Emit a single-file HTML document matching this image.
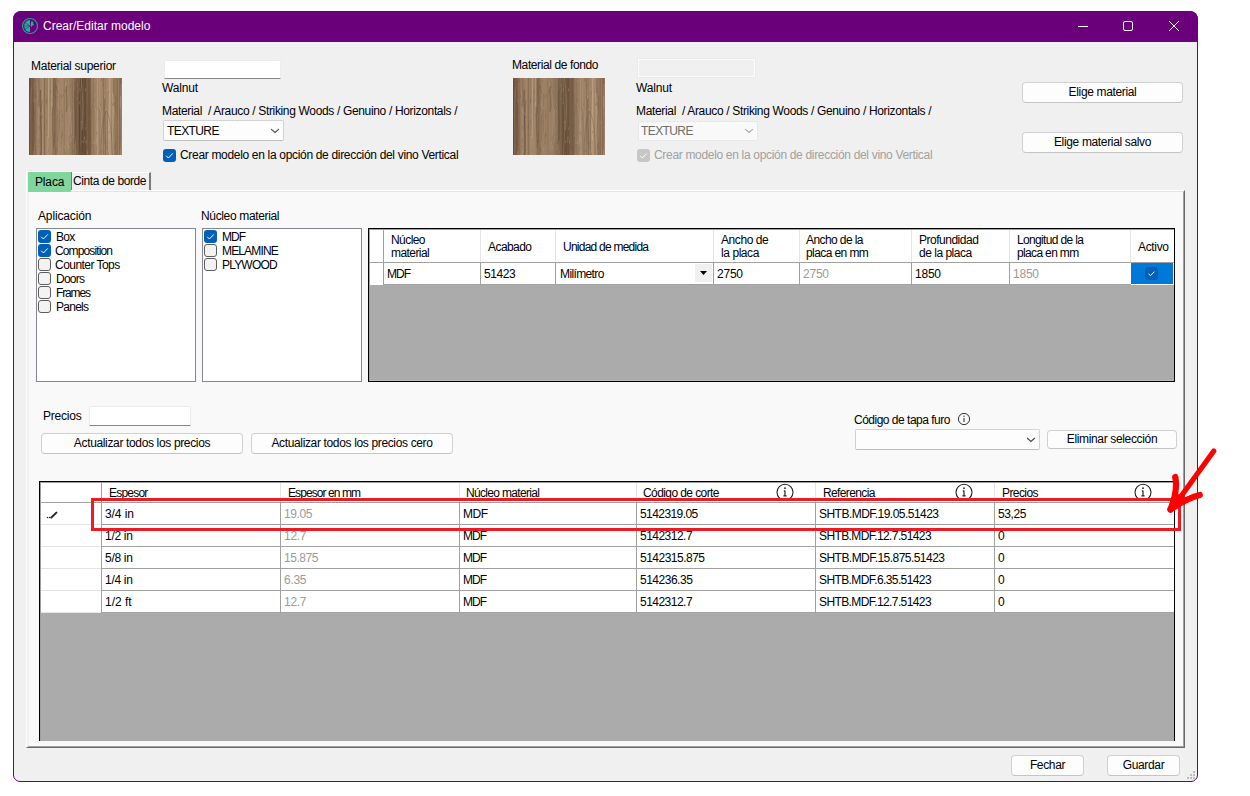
<!DOCTYPE html>
<html><head><meta charset="utf-8">
<style>
*{box-sizing:border-box;margin:0;padding:0}
html,body{width:1250px;height:796px;overflow:hidden;background:#fff;position:relative}
body{font-family:"Liberation Sans",sans-serif;font-size:12px;letter-spacing:-0.35px;color:#000}
.a{position:absolute}
.t{position:absolute;line-height:13px;white-space:pre;margin-top:1px}
#win{position:absolute;left:13px;top:11px;width:1185px;height:771px;border:1px solid #6a007a;border-radius:8px 8px 7px 7px;background:#f0f0f0;overflow:hidden}
#title{position:absolute;left:13px;top:11px;width:1185px;height:31px;background:#6a007a;border-radius:8px 8px 0 0}
.btn{position:absolute;background:#fdfdfd;border:1px solid #d0d0d0;border-bottom-color:#c4c4c4;border-radius:4px;text-align:center;line-height:18px}
.tb{position:absolute;background:#fff;border:1px solid #ececec;border-bottom:1px solid #868686;border-radius:2px 2px 0 0}
.cb{position:absolute;width:13px;height:13px;border-radius:3px;background:#005fb8}
.cbu{position:absolute;width:13px;height:13px;border-radius:3px;background:#f3f3f3;border:1px solid #5c5c5c}
.wood{position:absolute;background-color:#85705b}
.gl{position:absolute;background:#a0a0a0}
.gh{position:absolute;background:#e4e4e4}
</style></head><body>
<div id="win"></div>
<div id="title"></div>
<!-- title bar -->
<svg class="a" style="left:21px;top:17px" width="18" height="18" viewBox="0 0 18 18">
<circle cx="9" cy="9" r="7.5" fill="none" stroke="#1aa894" stroke-width="1.1"/>
<path d="M9 3.1 A5.9 5.9 0 0 0 9 14.9 Z" fill="#0fbc96"/>
<path d="M9.6 9 L10.3 4.2 L12.5 5 L12 6.6 L13 7.2 L12.2 8.4 L11.2 8.6 L10.8 10 Z" fill="#0fbc96"/>
<path d="M9 9 L3.6 5.4 M9 9 L3 9 M9 9 L3.8 12.4" stroke="#6a007a" stroke-width="0.55"/>
</svg>
<div class="t" style="left:43px;top:19px;color:#fff;font-size:12px;letter-spacing:0">Crear/Editar modelo</div>
<div class="a" style="left:1078px;top:26px;width:10px;height:1px;background:#fff"></div>
<div class="a" style="left:1123px;top:21px;width:10px;height:10px;border:1px solid #fff;border-radius:2px"></div>
<svg class="a" style="left:1168px;top:20px" width="12" height="12" viewBox="0 0 12 12"><path d="M1 1L11 11M11 1L1 11" stroke="#fff" stroke-width="1"/></svg>

<!-- header -->
<div class="t" style="left:31px;top:59px;letter-spacing:-0.27px">Material superior</div>
<div class="wood" id="wood1" style="left:29px;top:78px;width:93px;height:77px"><svg width="93" height="77" viewBox="0 0 93 77" preserveAspectRatio="none" style="display:block"><rect x="0" y="0" width="1.05" height="77" fill="#694f38"/><rect x="1" y="0" width="1.05" height="77" fill="#70553e"/><rect x="2" y="0" width="1.05" height="77" fill="#7c6148"/><rect x="3" y="0" width="1.05" height="77" fill="#785d45"/><rect x="4" y="0" width="1.05" height="77" fill="#81664d"/><rect x="5" y="0" width="1.05" height="77" fill="#8b7055"/><rect x="6" y="0" width="1.05" height="77" fill="#896d53"/><rect x="7" y="0" width="1.05" height="77" fill="#95795e"/><rect x="8" y="0" width="1.05" height="77" fill="#9d8164"/><rect x="9" y="0" width="1.05" height="77" fill="#a6896b"/><rect x="10" y="0" width="1.05" height="77" fill="#997d61"/><rect x="11" y="0" width="1.05" height="77" fill="#a08366"/><rect x="12" y="0" width="1.05" height="77" fill="#9c8064"/><rect x="13" y="0" width="1.05" height="77" fill="#a98d6e"/><rect x="14" y="0" width="1.05" height="77" fill="#9e8265"/><rect x="15" y="0" width="1.05" height="77" fill="#876c52"/><rect x="16" y="0" width="1.05" height="77" fill="#9c8063"/><rect x="17" y="0" width="1.05" height="77" fill="#a28669"/><rect x="18" y="0" width="1.05" height="77" fill="#a28668"/><rect x="19" y="0" width="1.05" height="77" fill="#a88b6d"/><rect x="20" y="0" width="1.05" height="77" fill="#a08467"/><rect x="21" y="0" width="1.05" height="77" fill="#9c7f63"/><rect x="22" y="0" width="1.05" height="77" fill="#a5896b"/><rect x="23" y="0" width="1.05" height="77" fill="#967a5e"/><rect x="24" y="0" width="1.05" height="77" fill="#8f7459"/><rect x="25" y="0" width="1.05" height="77" fill="#876c52"/><rect x="26" y="0" width="1.05" height="77" fill="#81664d"/><rect x="27" y="0" width="1.05" height="77" fill="#92765b"/><rect x="28" y="0" width="1.05" height="77" fill="#987c60"/><rect x="29" y="0" width="1.05" height="77" fill="#a5886b"/><rect x="30" y="0" width="1.05" height="77" fill="#9f8366"/><rect x="31" y="0" width="1.05" height="77" fill="#a38669"/><rect x="32" y="0" width="1.05" height="77" fill="#a18467"/><rect x="33" y="0" width="1.05" height="77" fill="#a4876a"/><rect x="34" y="0" width="1.05" height="77" fill="#9c8063"/><rect x="35" y="0" width="1.05" height="77" fill="#95795d"/><rect x="36" y="0" width="1.05" height="77" fill="#a28568"/><rect x="37" y="0" width="1.05" height="77" fill="#a18568"/><rect x="38" y="0" width="1.05" height="77" fill="#a08467"/><rect x="39" y="0" width="1.05" height="77" fill="#a08467"/><rect x="40" y="0" width="1.05" height="77" fill="#9a7e61"/><rect x="41" y="0" width="1.05" height="77" fill="#977b5f"/><rect x="42" y="0" width="1.05" height="77" fill="#94785c"/><rect x="43" y="0" width="1.05" height="77" fill="#8a6f54"/><rect x="44" y="0" width="1.05" height="77" fill="#967a5e"/><rect x="45" y="0" width="1.05" height="77" fill="#886c52"/><rect x="46" y="0" width="1.05" height="77" fill="#8a6f54"/><rect x="47" y="0" width="1.05" height="77" fill="#785d45"/><rect x="48" y="0" width="1.05" height="77" fill="#7e634a"/><rect x="49" y="0" width="1.05" height="77" fill="#765b43"/><rect x="50" y="0" width="1.05" height="77" fill="#5d442f"/><rect x="51" y="0" width="1.05" height="77" fill="#5e442f"/><rect x="52" y="0" width="1.05" height="77" fill="#6c523b"/><rect x="53" y="0" width="1.05" height="77" fill="#614731"/><rect x="54" y="0" width="1.05" height="77" fill="#6e543d"/><rect x="55" y="0" width="1.05" height="77" fill="#674d37"/><rect x="56" y="0" width="1.05" height="77" fill="#654b35"/><rect x="57" y="0" width="1.05" height="77" fill="#765b43"/><rect x="58" y="0" width="1.05" height="77" fill="#7b6047"/><rect x="59" y="0" width="1.05" height="77" fill="#71573f"/><rect x="60" y="0" width="1.05" height="77" fill="#725740"/><rect x="61" y="0" width="1.05" height="77" fill="#80654c"/><rect x="62" y="0" width="1.05" height="77" fill="#967a5e"/><rect x="63" y="0" width="1.05" height="77" fill="#997d61"/><rect x="64" y="0" width="1.05" height="77" fill="#92765b"/><rect x="65" y="0" width="1.05" height="77" fill="#9b7f63"/><rect x="66" y="0" width="1.05" height="77" fill="#9f8366"/><rect x="67" y="0" width="1.05" height="77" fill="#a18568"/><rect x="68" y="0" width="1.05" height="77" fill="#b19475"/><rect x="69" y="0" width="1.05" height="77" fill="#a38669"/><rect x="70" y="0" width="1.05" height="77" fill="#ab8e70"/><rect x="71" y="0" width="1.05" height="77" fill="#a4886a"/><rect x="72" y="0" width="1.05" height="77" fill="#977b5f"/><rect x="73" y="0" width="1.05" height="77" fill="#9b7f63"/><rect x="74" y="0" width="1.05" height="77" fill="#8d7257"/><rect x="75" y="0" width="1.05" height="77" fill="#9e8265"/><rect x="76" y="0" width="1.05" height="77" fill="#987c60"/><rect x="77" y="0" width="1.05" height="77" fill="#a3876a"/><rect x="78" y="0" width="1.05" height="77" fill="#a18568"/><rect x="79" y="0" width="1.05" height="77" fill="#a5896b"/><rect x="80" y="0" width="1.05" height="77" fill="#b79a7a"/><rect x="81" y="0" width="1.05" height="77" fill="#b19475"/><rect x="82" y="0" width="1.05" height="77" fill="#a08366"/><rect x="83" y="0" width="1.05" height="77" fill="#a6896c"/><rect x="84" y="0" width="1.05" height="77" fill="#91755a"/><rect x="85" y="0" width="1.05" height="77" fill="#907459"/><rect x="86" y="0" width="1.05" height="77" fill="#957a5e"/><rect x="87" y="0" width="1.05" height="77" fill="#907559"/><rect x="88" y="0" width="1.05" height="77" fill="#886d53"/><rect x="89" y="0" width="1.05" height="77" fill="#a08467"/><rect x="90" y="0" width="1.05" height="77" fill="#8f7459"/><rect x="91" y="0" width="1.05" height="77" fill="#8d7157"/><rect x="92" y="0" width="1.05" height="77" fill="#95795e"/><path d="M30.6 15 C31.2 28 29.8 41 30.9 54" stroke="#5a4838" stroke-width="0.8" opacity="0.23" fill="none"/><path d="M42.1 32 C40.1 43 44.6 54 41.1 64" stroke="#b9a387" stroke-width="0.8" opacity="0.49" fill="none"/><path d="M76.1 21 C76.0 36 73.5 51 76.0 66" stroke="#5a4838" stroke-width="0.8" opacity="0.26" fill="none"/><path d="M4.4 24 C3.9 39 6.8 53 4.2 68" stroke="#685341" stroke-width="0.8" opacity="0.54" fill="none"/><path d="M45.7 -6 C47.8 17 46.3 40 46.7 63" stroke="#685341" stroke-width="0.8" opacity="0.54" fill="none"/><path d="M26.1 7 C24.1 16 25.3 26 25.1 36" stroke="#5a4838" stroke-width="1.2" opacity="0.22" fill="none"/><path d="M53.2 39 C54.4 54 53.7 70 53.8 86" stroke="#4f3f31" stroke-width="1.2" opacity="0.25" fill="none"/><path d="M13.1 22 C10.2 46 13.9 71 11.6 95" stroke="#5a4838" stroke-width="1.0" opacity="0.37" fill="none"/><path d="M44.8 -15 C46.3 9 47.2 33 45.6 57" stroke="#4f3f31" stroke-width="0.6" opacity="0.25" fill="none"/><path d="M68.5 34 C68.1 53 70.3 73 68.3 92" stroke="#b9a387" stroke-width="1.2" opacity="0.32" fill="none"/><path d="M80.3 15 C77.8 35 81.1 55 79.0 75" stroke="#cbb598" stroke-width="1.2" opacity="0.43" fill="none"/><path d="M92.4 6 C89.9 33 93.9 60 91.1 86" stroke="#b9a387" stroke-width="1.2" opacity="0.53" fill="none"/><path d="M2.8 10 C5.3 31 1.3 52 4.0 73" stroke="#4f3f31" stroke-width="0.6" opacity="0.21" fill="none"/><path d="M1.1 25 C3.6 39 1.0 53 2.3 66" stroke="#685341" stroke-width="0.8" opacity="0.41" fill="none"/><path d="M22.5 28 C20.7 48 20.7 67 21.6 86" stroke="#b9a387" stroke-width="1.2" opacity="0.27" fill="none"/><path d="M20.4 1 C17.7 31 17.8 60 19.0 90" stroke="#c2ac90" stroke-width="1.2" opacity="0.25" fill="none"/><path d="M91.2 30 C91.3 44 92.2 57 91.2 71" stroke="#4f3f31" stroke-width="0.8" opacity="0.30" fill="none"/><path d="M66.6 30 C67.3 42 67.7 54 66.9 66" stroke="#cbb598" stroke-width="0.6" opacity="0.36" fill="none"/><path d="M26.1 18 C24.3 34 27.8 50 25.2 65" stroke="#685341" stroke-width="0.6" opacity="0.48" fill="none"/><path d="M24.8 18 C26.6 38 27.5 58 25.7 78" stroke="#cbb598" stroke-width="0.6" opacity="0.24" fill="none"/><path d="M63.7 25 C60.9 42 62.0 59 62.3 75" stroke="#4f3f31" stroke-width="0.6" opacity="0.29" fill="none"/><path d="M72.4 4 C74.8 30 69.9 56 73.6 83" stroke="#cbb598" stroke-width="0.8" opacity="0.38" fill="none"/><path d="M86.7 18 C86.0 42 87.1 67 86.4 92" stroke="#5a4838" stroke-width="0.8" opacity="0.36" fill="none"/><path d="M81.8 -14 C83.6 19 84.3 52 82.7 85" stroke="#b9a387" stroke-width="0.8" opacity="0.36" fill="none"/><path d="M11.5 12 C10.4 36 13.9 60 10.9 84" stroke="#4f3f31" stroke-width="1.0" opacity="0.54" fill="none"/><path d="M79.6 13 C79.5 36 76.8 60 79.6 83" stroke="#5a4838" stroke-width="1.0" opacity="0.21" fill="none"/><path d="M75.3 21 C75.1 45 78.2 69 75.2 93" stroke="#5a4838" stroke-width="1.0" opacity="0.26" fill="none"/><path d="M83.8 15 C85.3 36 83.4 58 84.5 79" stroke="#cbb598" stroke-width="1.2" opacity="0.44" fill="none"/><path d="M52.0 -1 C54.0 16 54.4 34 53.0 52" stroke="#c2ac90" stroke-width="1.0" opacity="0.38" fill="none"/><path d="M19.4 -8 C19.4 15 20.0 37 19.4 60" stroke="#cbb598" stroke-width="1.2" opacity="0.38" fill="none"/><path d="M2.6 9 C-0.0 32 2.8 55 1.3 78" stroke="#b9a387" stroke-width="0.6" opacity="0.39" fill="none"/><path d="M38.5 10 C40.9 25 41.1 40 39.7 56" stroke="#b9a387" stroke-width="1.2" opacity="0.29" fill="none"/><path d="M85.6 36 C87.2 45 82.7 55 86.4 65" stroke="#5a4838" stroke-width="0.6" opacity="0.27" fill="none"/><path d="M18.1 -5 C18.0 16 18.5 37 18.1 58" stroke="#685341" stroke-width="1.0" opacity="0.30" fill="none"/><path d="M79.2 -19 C81.2 9 79.9 36 80.2 64" stroke="#cbb598" stroke-width="1.2" opacity="0.27" fill="none"/><path d="M50.1 -6 C51.9 22 52.5 49 51.0 77" stroke="#c2ac90" stroke-width="0.8" opacity="0.39" fill="none"/><path d="M29.4 33 C27.8 43 30.7 53 28.6 63" stroke="#5a4838" stroke-width="0.8" opacity="0.28" fill="none"/><path d="M24.1 -8 C25.9 17 21.7 42 25.0 67" stroke="#4f3f31" stroke-width="0.8" opacity="0.39" fill="none"/><path d="M53.0 10 C51.1 33 50.4 55 52.1 78" stroke="#4f3f31" stroke-width="1.0" opacity="0.24" fill="none"/><path d="M9.9 -11 C8.1 2 11.9 16 9.0 29" stroke="#685341" stroke-width="1.2" opacity="0.41" fill="none"/><path d="M92.1 -15 C91.4 -4 91.7 7 91.8 18" stroke="#5a4838" stroke-width="1.2" opacity="0.25" fill="none"/><path d="M33.0 31 C32.7 41 34.4 52 32.8 63" stroke="#4f3f31" stroke-width="0.6" opacity="0.20" fill="none"/><path d="M37.7 -1 C39.7 10 39.9 20 38.7 31" stroke="#5a4838" stroke-width="0.6" opacity="0.23" fill="none"/><path d="M84.5 28 C87.0 40 86.0 52 85.7 65" stroke="#c2ac90" stroke-width="1.0" opacity="0.38" fill="none"/><path d="M72.4 33 C74.0 50 73.9 68 73.2 85" stroke="#b9a387" stroke-width="1.0" opacity="0.25" fill="none"/><path d="M37.7 8 C36.9 17 38.6 25 37.3 34" stroke="#5a4838" stroke-width="1.0" opacity="0.48" fill="none"/><path d="M58.0 20 C58.2 38 57.4 56 58.1 74" stroke="#685341" stroke-width="0.8" opacity="0.30" fill="none"/><path d="M93.0 39 C93.7 47 94.4 56 93.3 65" stroke="#685341" stroke-width="1.2" opacity="0.24" fill="none"/><path d="M23.9 -19 C22.5 -3 22.9 13 23.2 29" stroke="#c2ac90" stroke-width="1.2" opacity="0.47" fill="none"/><path d="M50.3 18 C47.7 41 50.9 64 49.0 87" stroke="#685341" stroke-width="0.6" opacity="0.40" fill="none"/><path d="M70.6 31 C71.2 47 70.2 63 70.9 78" stroke="#5a4838" stroke-width="0.8" opacity="0.34" fill="none"/><path d="M46.0 12 C44.6 30 48.6 48 45.3 66" stroke="#4f3f31" stroke-width="1.0" opacity="0.41" fill="none"/><path d="M61.7 15 C61.2 35 62.8 56 61.4 76" stroke="#5a4838" stroke-width="0.8" opacity="0.20" fill="none"/><path d="M4.9 -16 C4.5 19 4.8 54 4.7 89" stroke="#4f3f31" stroke-width="1.0" opacity="0.22" fill="none"/><path d="M90.5 -11 C89.0 24 91.7 59 89.7 94" stroke="#685341" stroke-width="1.2" opacity="0.23" fill="none"/><rect x="4.7" y="32.1" width="0.8" height="2.0" fill="#5e4b3b" opacity="0.16"/><rect x="49.1" y="9.6" width="0.8" height="1.8" fill="#c6b093" opacity="0.25"/><rect x="55.9" y="49.2" width="0.8" height="2.4" fill="#c6b093" opacity="0.34"/><rect x="75.8" y="10.5" width="0.8" height="3.3" fill="#c6b093" opacity="0.21"/><rect x="10.6" y="68.7" width="0.8" height="2.2" fill="#c6b093" opacity="0.30"/><rect x="67.4" y="53.8" width="0.8" height="3.1" fill="#5e4b3b" opacity="0.34"/><rect x="17.7" y="19.2" width="0.8" height="3.7" fill="#5e4b3b" opacity="0.16"/><rect x="5.7" y="20.9" width="0.8" height="1.6" fill="#c6b093" opacity="0.16"/><rect x="20.7" y="21.4" width="0.8" height="3.8" fill="#5e4b3b" opacity="0.19"/><rect x="21.8" y="75.6" width="0.8" height="2.7" fill="#c6b093" opacity="0.20"/><rect x="32.0" y="57.4" width="0.8" height="3.5" fill="#5e4b3b" opacity="0.26"/><rect x="76.4" y="64.5" width="0.8" height="2.6" fill="#5e4b3b" opacity="0.34"/><rect x="36.3" y="11.6" width="0.8" height="3.1" fill="#5e4b3b" opacity="0.40"/><rect x="30.3" y="42.2" width="0.8" height="2.6" fill="#5e4b3b" opacity="0.24"/><rect x="9.0" y="67.4" width="0.8" height="2.9" fill="#5e4b3b" opacity="0.26"/><rect x="52.8" y="62.8" width="0.8" height="2.2" fill="#c6b093" opacity="0.34"/><rect x="7.1" y="16.4" width="0.8" height="3.2" fill="#5e4b3b" opacity="0.27"/><rect x="71.1" y="25.3" width="0.8" height="2.0" fill="#5e4b3b" opacity="0.31"/><rect x="30.4" y="69.8" width="0.8" height="3.3" fill="#c6b093" opacity="0.29"/><rect x="85.4" y="72.4" width="0.8" height="2.6" fill="#c6b093" opacity="0.35"/><rect x="28.3" y="24.5" width="0.8" height="3.9" fill="#c6b093" opacity="0.33"/><rect x="48.0" y="6.5" width="0.8" height="1.6" fill="#c6b093" opacity="0.32"/><rect x="54.4" y="61.3" width="0.8" height="3.5" fill="#c6b093" opacity="0.29"/><rect x="77.8" y="43.3" width="0.8" height="1.7" fill="#5e4b3b" opacity="0.26"/><rect x="79.5" y="62.5" width="0.8" height="2.8" fill="#5e4b3b" opacity="0.29"/><rect x="52.8" y="74.4" width="0.8" height="1.7" fill="#c6b093" opacity="0.29"/><rect x="73.3" y="6.5" width="0.8" height="2.2" fill="#5e4b3b" opacity="0.18"/><rect x="29.2" y="2.0" width="0.8" height="1.7" fill="#5e4b3b" opacity="0.35"/><rect x="39.3" y="54.8" width="0.8" height="3.4" fill="#c6b093" opacity="0.28"/><rect x="71.1" y="30.4" width="0.8" height="3.5" fill="#c6b093" opacity="0.23"/><rect x="12.7" y="37.6" width="0.8" height="3.3" fill="#5e4b3b" opacity="0.38"/><rect x="38.2" y="63.6" width="0.8" height="3.6" fill="#c6b093" opacity="0.35"/><rect x="77.5" y="68.4" width="0.8" height="2.8" fill="#5e4b3b" opacity="0.33"/><rect x="74.6" y="32.5" width="0.8" height="3.8" fill="#c6b093" opacity="0.21"/><rect x="15.1" y="48.9" width="0.8" height="2.3" fill="#5e4b3b" opacity="0.25"/><rect x="49.2" y="21.1" width="0.8" height="2.7" fill="#5e4b3b" opacity="0.33"/><rect x="28.2" y="12.0" width="0.8" height="3.8" fill="#5e4b3b" opacity="0.34"/><rect x="1.6" y="37.0" width="0.8" height="2.3" fill="#5e4b3b" opacity="0.20"/><rect x="33.4" y="45.3" width="0.8" height="3.0" fill="#c6b093" opacity="0.21"/><rect x="17.2" y="21.6" width="0.8" height="3.8" fill="#5e4b3b" opacity="0.38"/><rect x="58.3" y="72.5" width="0.8" height="3.6" fill="#c6b093" opacity="0.27"/><rect x="37.4" y="73.6" width="0.8" height="2.7" fill="#5e4b3b" opacity="0.21"/><rect x="4.6" y="73.0" width="0.8" height="3.9" fill="#c6b093" opacity="0.35"/><rect x="72.0" y="60.7" width="0.8" height="3.1" fill="#5e4b3b" opacity="0.21"/><rect x="1.0" y="36.4" width="0.8" height="2.6" fill="#c6b093" opacity="0.21"/><rect x="39.2" y="67.4" width="0.8" height="1.9" fill="#c6b093" opacity="0.23"/><rect x="24.1" y="66.9" width="0.8" height="3.1" fill="#5e4b3b" opacity="0.40"/><rect x="24.8" y="41.2" width="0.8" height="2.9" fill="#5e4b3b" opacity="0.19"/><rect x="19.0" y="70.5" width="0.8" height="3.6" fill="#5e4b3b" opacity="0.17"/><rect x="25.1" y="55.2" width="0.8" height="3.7" fill="#5e4b3b" opacity="0.32"/><rect x="7.7" y="57.6" width="0.8" height="1.5" fill="#c6b093" opacity="0.20"/><rect x="18.0" y="52.5" width="0.8" height="2.0" fill="#c6b093" opacity="0.29"/><rect x="48.9" y="12.1" width="0.8" height="2.3" fill="#c6b093" opacity="0.25"/><rect x="51.7" y="76.8" width="0.8" height="2.4" fill="#5e4b3b" opacity="0.32"/><rect x="9.8" y="30.4" width="0.8" height="3.4" fill="#c6b093" opacity="0.35"/><rect x="11.3" y="34.3" width="0.8" height="3.3" fill="#c6b093" opacity="0.27"/><rect x="27.3" y="8.7" width="0.8" height="3.6" fill="#5e4b3b" opacity="0.36"/><rect x="66.9" y="69.4" width="0.8" height="2.2" fill="#5e4b3b" opacity="0.24"/><rect x="50.2" y="23.0" width="0.8" height="3.4" fill="#c6b093" opacity="0.29"/><rect x="8.1" y="14.5" width="0.8" height="3.3" fill="#c6b093" opacity="0.23"/><rect x="87.9" y="43.3" width="0.8" height="2.6" fill="#c6b093" opacity="0.25"/><rect x="9.5" y="47.9" width="0.8" height="3.2" fill="#5e4b3b" opacity="0.33"/><rect x="16.7" y="31.0" width="0.8" height="3.0" fill="#c6b093" opacity="0.17"/><rect x="21.1" y="12.1" width="0.8" height="2.6" fill="#5e4b3b" opacity="0.34"/><rect x="31.8" y="63.4" width="0.8" height="3.1" fill="#5e4b3b" opacity="0.34"/><rect x="76.4" y="29.7" width="0.8" height="3.8" fill="#c6b093" opacity="0.31"/><rect x="67.6" y="47.2" width="0.8" height="4.0" fill="#c6b093" opacity="0.35"/><rect x="61.4" y="46.9" width="0.8" height="2.2" fill="#5e4b3b" opacity="0.20"/><rect x="28.5" y="34.0" width="0.8" height="2.0" fill="#c6b093" opacity="0.23"/><rect x="27.3" y="7.9" width="0.8" height="2.1" fill="#5e4b3b" opacity="0.28"/><rect x="27.8" y="18.0" width="0.8" height="2.9" fill="#5e4b3b" opacity="0.20"/><rect x="86.8" y="76.9" width="0.8" height="2.9" fill="#5e4b3b" opacity="0.16"/><rect x="61.3" y="59.8" width="0.8" height="2.1" fill="#5e4b3b" opacity="0.29"/><rect x="64.8" y="25.3" width="0.8" height="2.2" fill="#c6b093" opacity="0.37"/><rect x="42.1" y="56.2" width="0.8" height="3.8" fill="#5e4b3b" opacity="0.29"/><rect x="52.1" y="43.1" width="0.8" height="1.9" fill="#c6b093" opacity="0.34"/><rect x="83.4" y="25.8" width="0.8" height="1.8" fill="#5e4b3b" opacity="0.36"/><rect x="26.8" y="69.1" width="0.8" height="3.4" fill="#5e4b3b" opacity="0.24"/><rect x="15.4" y="46.0" width="0.8" height="2.6" fill="#5e4b3b" opacity="0.25"/><rect x="72.8" y="71.6" width="0.8" height="2.3" fill="#5e4b3b" opacity="0.32"/><rect x="68.6" y="29.4" width="0.8" height="1.9" fill="#5e4b3b" opacity="0.25"/><rect x="3.1" y="40.6" width="0.8" height="2.9" fill="#5e4b3b" opacity="0.19"/><rect x="48.3" y="20.3" width="0.8" height="1.6" fill="#c6b093" opacity="0.35"/><rect x="67.1" y="60.6" width="0.8" height="3.9" fill="#c6b093" opacity="0.30"/><rect x="43.7" y="31.7" width="0.8" height="3.4" fill="#c6b093" opacity="0.27"/><rect x="92.5" y="64.5" width="0.8" height="3.6" fill="#c6b093" opacity="0.18"/><rect x="10.7" y="72.3" width="0.8" height="2.8" fill="#c6b093" opacity="0.26"/><rect x="84.1" y="24.7" width="0.8" height="2.2" fill="#5e4b3b" opacity="0.30"/><rect x="40.3" y="29.0" width="0.8" height="3.4" fill="#c6b093" opacity="0.23"/><rect x="55.2" y="5.4" width="0.8" height="3.6" fill="#5e4b3b" opacity="0.21"/><rect x="81.2" y="74.9" width="0.8" height="3.2" fill="#c6b093" opacity="0.28"/><rect x="22.2" y="23.6" width="0.8" height="3.9" fill="#c6b093" opacity="0.37"/><rect x="92.9" y="56.3" width="0.8" height="3.7" fill="#c6b093" opacity="0.26"/><rect x="74.9" y="17.1" width="0.8" height="2.9" fill="#c6b093" opacity="0.38"/><rect x="9.2" y="61.0" width="0.8" height="3.7" fill="#5e4b3b" opacity="0.29"/><rect x="42.1" y="22.8" width="0.8" height="1.6" fill="#c6b093" opacity="0.19"/><rect x="41.0" y="34.7" width="0.8" height="1.9" fill="#c6b093" opacity="0.32"/><rect x="21.5" y="23.6" width="0.8" height="3.7" fill="#c6b093" opacity="0.23"/><rect x="46.4" y="71.9" width="0.8" height="3.7" fill="#c6b093" opacity="0.20"/><rect x="79.9" y="53.3" width="0.8" height="2.0" fill="#5e4b3b" opacity="0.36"/><rect x="32.9" y="36.4" width="0.8" height="3.1" fill="#5e4b3b" opacity="0.32"/><rect x="52.1" y="41.0" width="0.8" height="2.0" fill="#5e4b3b" opacity="0.37"/><rect x="4.7" y="8.2" width="0.8" height="3.9" fill="#c6b093" opacity="0.22"/><rect x="39.1" y="67.7" width="0.8" height="3.2" fill="#c6b093" opacity="0.38"/><rect x="41.4" y="6.1" width="0.8" height="3.7" fill="#5e4b3b" opacity="0.18"/><rect x="64.3" y="20.7" width="0.8" height="2.8" fill="#5e4b3b" opacity="0.22"/><rect x="25.4" y="61.9" width="0.8" height="3.0" fill="#5e4b3b" opacity="0.21"/><rect x="28.0" y="71.4" width="0.8" height="2.2" fill="#5e4b3b" opacity="0.31"/><rect x="8.4" y="75.7" width="0.8" height="3.8" fill="#c6b093" opacity="0.17"/><rect x="84.4" y="0.5" width="0.8" height="2.8" fill="#c6b093" opacity="0.26"/><rect x="52.9" y="12.7" width="0.8" height="2.1" fill="#5e4b3b" opacity="0.22"/><rect x="51.0" y="14.3" width="0.8" height="4.0" fill="#5e4b3b" opacity="0.16"/><rect x="42.9" y="57.8" width="0.8" height="1.5" fill="#c6b093" opacity="0.37"/><rect x="5.6" y="4.9" width="0.8" height="2.3" fill="#c6b093" opacity="0.27"/><rect x="3.0" y="22.4" width="0.8" height="3.0" fill="#5e4b3b" opacity="0.34"/><rect x="10.4" y="33.5" width="0.8" height="2.9" fill="#c6b093" opacity="0.21"/><rect x="66.6" y="55.6" width="0.8" height="2.7" fill="#c6b093" opacity="0.21"/><rect x="53.9" y="38.4" width="0.8" height="2.0" fill="#5e4b3b" opacity="0.39"/><rect x="4.9" y="34.5" width="0.8" height="2.3" fill="#5e4b3b" opacity="0.30"/><rect x="56.6" y="62.1" width="0.8" height="3.3" fill="#c6b093" opacity="0.36"/><rect x="2.9" y="8.8" width="0.8" height="2.9" fill="#5e4b3b" opacity="0.29"/><rect x="73.6" y="18.3" width="0.8" height="1.6" fill="#5e4b3b" opacity="0.26"/><rect x="64.7" y="63.1" width="0.8" height="3.4" fill="#c6b093" opacity="0.27"/><rect x="60.5" y="39.3" width="0.8" height="2.1" fill="#c6b093" opacity="0.19"/><rect x="64.2" y="64.0" width="0.8" height="1.7" fill="#c6b093" opacity="0.25"/><rect x="33.9" y="16.7" width="0.8" height="1.8" fill="#5e4b3b" opacity="0.34"/><rect x="55.9" y="10.4" width="0.8" height="2.8" fill="#c6b093" opacity="0.40"/><rect x="0.3" y="31.6" width="0.8" height="1.7" fill="#5e4b3b" opacity="0.29"/><rect x="43.9" y="72.0" width="0.8" height="3.2" fill="#5e4b3b" opacity="0.33"/><rect x="90.8" y="47.2" width="0.8" height="2.1" fill="#c6b093" opacity="0.29"/><rect x="22.5" y="35.5" width="0.8" height="2.4" fill="#5e4b3b" opacity="0.23"/><rect x="91.3" y="47.0" width="0.8" height="1.9" fill="#5e4b3b" opacity="0.30"/><rect x="92.5" y="56.8" width="0.8" height="2.7" fill="#5e4b3b" opacity="0.25"/><rect x="78.4" y="29.3" width="0.8" height="2.0" fill="#5e4b3b" opacity="0.24"/><rect x="17.1" y="42.3" width="0.8" height="2.7" fill="#5e4b3b" opacity="0.25"/><rect x="55.2" y="58.5" width="0.8" height="2.6" fill="#c6b093" opacity="0.40"/><rect x="63.2" y="66.4" width="0.8" height="2.9" fill="#5e4b3b" opacity="0.25"/><rect x="4.4" y="21.3" width="0.8" height="3.1" fill="#c6b093" opacity="0.28"/><rect x="69.0" y="39.4" width="0.8" height="2.2" fill="#5e4b3b" opacity="0.24"/><rect x="14.3" y="72.1" width="0.8" height="1.8" fill="#c6b093" opacity="0.21"/><rect x="78.1" y="9.2" width="0.8" height="3.6" fill="#c6b093" opacity="0.26"/><rect x="79.5" y="29.4" width="0.8" height="3.4" fill="#c6b093" opacity="0.28"/><rect x="5.1" y="30.3" width="0.8" height="2.7" fill="#5e4b3b" opacity="0.20"/><rect x="47.8" y="9.8" width="0.8" height="2.3" fill="#5e4b3b" opacity="0.26"/><rect x="50.6" y="10.5" width="0.8" height="2.3" fill="#c6b093" opacity="0.26"/><rect x="35.1" y="67.8" width="0.8" height="2.8" fill="#c6b093" opacity="0.26"/><rect x="12.7" y="39.8" width="0.8" height="2.1" fill="#c6b093" opacity="0.22"/><rect x="32.1" y="16.6" width="0.8" height="3.6" fill="#5e4b3b" opacity="0.34"/><rect x="44.9" y="0.9" width="0.8" height="3.2" fill="#c6b093" opacity="0.17"/><rect x="79.3" y="43.0" width="0.8" height="3.2" fill="#c6b093" opacity="0.39"/><rect x="80.8" y="18.1" width="0.8" height="1.7" fill="#c6b093" opacity="0.26"/><rect x="36.5" y="4.6" width="0.8" height="3.8" fill="#c6b093" opacity="0.22"/><rect x="65.4" y="17.1" width="0.8" height="2.0" fill="#c6b093" opacity="0.34"/><rect x="32.6" y="54.8" width="0.8" height="3.4" fill="#5e4b3b" opacity="0.38"/><rect x="74.8" y="36.8" width="0.8" height="3.3" fill="#c6b093" opacity="0.29"/><rect x="65.1" y="1.8" width="0.8" height="1.8" fill="#c6b093" opacity="0.38"/><rect x="84.9" y="20.9" width="0.8" height="2.7" fill="#c6b093" opacity="0.30"/><rect x="43.6" y="25.1" width="0.8" height="1.7" fill="#c6b093" opacity="0.16"/><rect x="30.1" y="28.7" width="0.8" height="2.2" fill="#c6b093" opacity="0.32"/><rect x="17.3" y="36.1" width="0.8" height="3.9" fill="#c6b093" opacity="0.24"/><path d="M72 77 C72 52 74 40 77.5 33 C81 40 83 52 83.5 77" stroke="#5f4c3c" stroke-width="1" opacity="0.3" fill="none"/></svg></div>
<div class="tb" style="left:164px;top:60px;width:117px;height:19px"></div>
<div class="t" style="left:162px;top:81px;letter-spacing:-0.18px">Walnut</div>
<div class="t" style="left:162px;top:104px;letter-spacing:-0.34px">Material  / Arauco / Striking Woods / Genuino / Horizontals /</div>
<div class="a" style="left:163px;top:120px;width:121px;height:21px;background:#fdfdfd;border:1px solid #d2d2d2;border-bottom-color:#bdbdbd;border-radius:2px"></div>
<div class="t" style="left:167px;top:124px;letter-spacing:-0.60px">TEXTURE</div>
<svg class="a" style="left:270px;top:128px" width="10" height="6" viewBox="0 0 10 6"><path d="M1.1 1.2L5 4.5L8.9 1.2" fill="none" stroke="#444" stroke-width="1.1"/></svg>
<div class="cb" style="left:163px;top:149px"></div>
<svg class="a" style="left:163px;top:149px" width="13" height="13" viewBox="0 0 13 13"><path d="M3.2 6.8L5.4 9L9.8 4.4" fill="none" stroke="#fff" stroke-width="1"/></svg>
<div class="t" style="left:180px;top:148px;letter-spacing:-0.32px">Crear modelo en la opción de dirección del vino Vertical</div>

<div class="t" style="left:512px;top:58px;letter-spacing:-0.39px">Material de fondo</div>
<div class="wood" id="wood2" style="left:513px;top:78px;width:92px;height:77px"><svg width="92" height="77" viewBox="0 0 93 77" preserveAspectRatio="none" style="display:block"><rect x="0" y="0" width="1.05" height="77" fill="#694f38"/><rect x="1" y="0" width="1.05" height="77" fill="#70553e"/><rect x="2" y="0" width="1.05" height="77" fill="#7c6148"/><rect x="3" y="0" width="1.05" height="77" fill="#785d45"/><rect x="4" y="0" width="1.05" height="77" fill="#81664d"/><rect x="5" y="0" width="1.05" height="77" fill="#8b7055"/><rect x="6" y="0" width="1.05" height="77" fill="#896d53"/><rect x="7" y="0" width="1.05" height="77" fill="#95795e"/><rect x="8" y="0" width="1.05" height="77" fill="#9d8164"/><rect x="9" y="0" width="1.05" height="77" fill="#a6896b"/><rect x="10" y="0" width="1.05" height="77" fill="#997d61"/><rect x="11" y="0" width="1.05" height="77" fill="#a08366"/><rect x="12" y="0" width="1.05" height="77" fill="#9c8064"/><rect x="13" y="0" width="1.05" height="77" fill="#a98d6e"/><rect x="14" y="0" width="1.05" height="77" fill="#9e8265"/><rect x="15" y="0" width="1.05" height="77" fill="#876c52"/><rect x="16" y="0" width="1.05" height="77" fill="#9c8063"/><rect x="17" y="0" width="1.05" height="77" fill="#a28669"/><rect x="18" y="0" width="1.05" height="77" fill="#a28668"/><rect x="19" y="0" width="1.05" height="77" fill="#a88b6d"/><rect x="20" y="0" width="1.05" height="77" fill="#a08467"/><rect x="21" y="0" width="1.05" height="77" fill="#9c7f63"/><rect x="22" y="0" width="1.05" height="77" fill="#a5896b"/><rect x="23" y="0" width="1.05" height="77" fill="#967a5e"/><rect x="24" y="0" width="1.05" height="77" fill="#8f7459"/><rect x="25" y="0" width="1.05" height="77" fill="#876c52"/><rect x="26" y="0" width="1.05" height="77" fill="#81664d"/><rect x="27" y="0" width="1.05" height="77" fill="#92765b"/><rect x="28" y="0" width="1.05" height="77" fill="#987c60"/><rect x="29" y="0" width="1.05" height="77" fill="#a5886b"/><rect x="30" y="0" width="1.05" height="77" fill="#9f8366"/><rect x="31" y="0" width="1.05" height="77" fill="#a38669"/><rect x="32" y="0" width="1.05" height="77" fill="#a18467"/><rect x="33" y="0" width="1.05" height="77" fill="#a4876a"/><rect x="34" y="0" width="1.05" height="77" fill="#9c8063"/><rect x="35" y="0" width="1.05" height="77" fill="#95795d"/><rect x="36" y="0" width="1.05" height="77" fill="#a28568"/><rect x="37" y="0" width="1.05" height="77" fill="#a18568"/><rect x="38" y="0" width="1.05" height="77" fill="#a08467"/><rect x="39" y="0" width="1.05" height="77" fill="#a08467"/><rect x="40" y="0" width="1.05" height="77" fill="#9a7e61"/><rect x="41" y="0" width="1.05" height="77" fill="#977b5f"/><rect x="42" y="0" width="1.05" height="77" fill="#94785c"/><rect x="43" y="0" width="1.05" height="77" fill="#8a6f54"/><rect x="44" y="0" width="1.05" height="77" fill="#967a5e"/><rect x="45" y="0" width="1.05" height="77" fill="#886c52"/><rect x="46" y="0" width="1.05" height="77" fill="#8a6f54"/><rect x="47" y="0" width="1.05" height="77" fill="#785d45"/><rect x="48" y="0" width="1.05" height="77" fill="#7e634a"/><rect x="49" y="0" width="1.05" height="77" fill="#765b43"/><rect x="50" y="0" width="1.05" height="77" fill="#5d442f"/><rect x="51" y="0" width="1.05" height="77" fill="#5e442f"/><rect x="52" y="0" width="1.05" height="77" fill="#6c523b"/><rect x="53" y="0" width="1.05" height="77" fill="#614731"/><rect x="54" y="0" width="1.05" height="77" fill="#6e543d"/><rect x="55" y="0" width="1.05" height="77" fill="#674d37"/><rect x="56" y="0" width="1.05" height="77" fill="#654b35"/><rect x="57" y="0" width="1.05" height="77" fill="#765b43"/><rect x="58" y="0" width="1.05" height="77" fill="#7b6047"/><rect x="59" y="0" width="1.05" height="77" fill="#71573f"/><rect x="60" y="0" width="1.05" height="77" fill="#725740"/><rect x="61" y="0" width="1.05" height="77" fill="#80654c"/><rect x="62" y="0" width="1.05" height="77" fill="#967a5e"/><rect x="63" y="0" width="1.05" height="77" fill="#997d61"/><rect x="64" y="0" width="1.05" height="77" fill="#92765b"/><rect x="65" y="0" width="1.05" height="77" fill="#9b7f63"/><rect x="66" y="0" width="1.05" height="77" fill="#9f8366"/><rect x="67" y="0" width="1.05" height="77" fill="#a18568"/><rect x="68" y="0" width="1.05" height="77" fill="#b19475"/><rect x="69" y="0" width="1.05" height="77" fill="#a38669"/><rect x="70" y="0" width="1.05" height="77" fill="#ab8e70"/><rect x="71" y="0" width="1.05" height="77" fill="#a4886a"/><rect x="72" y="0" width="1.05" height="77" fill="#977b5f"/><rect x="73" y="0" width="1.05" height="77" fill="#9b7f63"/><rect x="74" y="0" width="1.05" height="77" fill="#8d7257"/><rect x="75" y="0" width="1.05" height="77" fill="#9e8265"/><rect x="76" y="0" width="1.05" height="77" fill="#987c60"/><rect x="77" y="0" width="1.05" height="77" fill="#a3876a"/><rect x="78" y="0" width="1.05" height="77" fill="#a18568"/><rect x="79" y="0" width="1.05" height="77" fill="#a5896b"/><rect x="80" y="0" width="1.05" height="77" fill="#b79a7a"/><rect x="81" y="0" width="1.05" height="77" fill="#b19475"/><rect x="82" y="0" width="1.05" height="77" fill="#a08366"/><rect x="83" y="0" width="1.05" height="77" fill="#a6896c"/><rect x="84" y="0" width="1.05" height="77" fill="#91755a"/><rect x="85" y="0" width="1.05" height="77" fill="#907459"/><rect x="86" y="0" width="1.05" height="77" fill="#957a5e"/><rect x="87" y="0" width="1.05" height="77" fill="#907559"/><rect x="88" y="0" width="1.05" height="77" fill="#886d53"/><rect x="89" y="0" width="1.05" height="77" fill="#a08467"/><rect x="90" y="0" width="1.05" height="77" fill="#8f7459"/><rect x="91" y="0" width="1.05" height="77" fill="#8d7157"/><rect x="92" y="0" width="1.05" height="77" fill="#95795e"/><path d="M30.6 15 C31.2 28 29.8 41 30.9 54" stroke="#5a4838" stroke-width="0.8" opacity="0.23" fill="none"/><path d="M42.1 32 C40.1 43 44.6 54 41.1 64" stroke="#b9a387" stroke-width="0.8" opacity="0.49" fill="none"/><path d="M76.1 21 C76.0 36 73.5 51 76.0 66" stroke="#5a4838" stroke-width="0.8" opacity="0.26" fill="none"/><path d="M4.4 24 C3.9 39 6.8 53 4.2 68" stroke="#685341" stroke-width="0.8" opacity="0.54" fill="none"/><path d="M45.7 -6 C47.8 17 46.3 40 46.7 63" stroke="#685341" stroke-width="0.8" opacity="0.54" fill="none"/><path d="M26.1 7 C24.1 16 25.3 26 25.1 36" stroke="#5a4838" stroke-width="1.2" opacity="0.22" fill="none"/><path d="M53.2 39 C54.4 54 53.7 70 53.8 86" stroke="#4f3f31" stroke-width="1.2" opacity="0.25" fill="none"/><path d="M13.1 22 C10.2 46 13.9 71 11.6 95" stroke="#5a4838" stroke-width="1.0" opacity="0.37" fill="none"/><path d="M44.8 -15 C46.3 9 47.2 33 45.6 57" stroke="#4f3f31" stroke-width="0.6" opacity="0.25" fill="none"/><path d="M68.5 34 C68.1 53 70.3 73 68.3 92" stroke="#b9a387" stroke-width="1.2" opacity="0.32" fill="none"/><path d="M80.3 15 C77.8 35 81.1 55 79.0 75" stroke="#cbb598" stroke-width="1.2" opacity="0.43" fill="none"/><path d="M92.4 6 C89.9 33 93.9 60 91.1 86" stroke="#b9a387" stroke-width="1.2" opacity="0.53" fill="none"/><path d="M2.8 10 C5.3 31 1.3 52 4.0 73" stroke="#4f3f31" stroke-width="0.6" opacity="0.21" fill="none"/><path d="M1.1 25 C3.6 39 1.0 53 2.3 66" stroke="#685341" stroke-width="0.8" opacity="0.41" fill="none"/><path d="M22.5 28 C20.7 48 20.7 67 21.6 86" stroke="#b9a387" stroke-width="1.2" opacity="0.27" fill="none"/><path d="M20.4 1 C17.7 31 17.8 60 19.0 90" stroke="#c2ac90" stroke-width="1.2" opacity="0.25" fill="none"/><path d="M91.2 30 C91.3 44 92.2 57 91.2 71" stroke="#4f3f31" stroke-width="0.8" opacity="0.30" fill="none"/><path d="M66.6 30 C67.3 42 67.7 54 66.9 66" stroke="#cbb598" stroke-width="0.6" opacity="0.36" fill="none"/><path d="M26.1 18 C24.3 34 27.8 50 25.2 65" stroke="#685341" stroke-width="0.6" opacity="0.48" fill="none"/><path d="M24.8 18 C26.6 38 27.5 58 25.7 78" stroke="#cbb598" stroke-width="0.6" opacity="0.24" fill="none"/><path d="M63.7 25 C60.9 42 62.0 59 62.3 75" stroke="#4f3f31" stroke-width="0.6" opacity="0.29" fill="none"/><path d="M72.4 4 C74.8 30 69.9 56 73.6 83" stroke="#cbb598" stroke-width="0.8" opacity="0.38" fill="none"/><path d="M86.7 18 C86.0 42 87.1 67 86.4 92" stroke="#5a4838" stroke-width="0.8" opacity="0.36" fill="none"/><path d="M81.8 -14 C83.6 19 84.3 52 82.7 85" stroke="#b9a387" stroke-width="0.8" opacity="0.36" fill="none"/><path d="M11.5 12 C10.4 36 13.9 60 10.9 84" stroke="#4f3f31" stroke-width="1.0" opacity="0.54" fill="none"/><path d="M79.6 13 C79.5 36 76.8 60 79.6 83" stroke="#5a4838" stroke-width="1.0" opacity="0.21" fill="none"/><path d="M75.3 21 C75.1 45 78.2 69 75.2 93" stroke="#5a4838" stroke-width="1.0" opacity="0.26" fill="none"/><path d="M83.8 15 C85.3 36 83.4 58 84.5 79" stroke="#cbb598" stroke-width="1.2" opacity="0.44" fill="none"/><path d="M52.0 -1 C54.0 16 54.4 34 53.0 52" stroke="#c2ac90" stroke-width="1.0" opacity="0.38" fill="none"/><path d="M19.4 -8 C19.4 15 20.0 37 19.4 60" stroke="#cbb598" stroke-width="1.2" opacity="0.38" fill="none"/><path d="M2.6 9 C-0.0 32 2.8 55 1.3 78" stroke="#b9a387" stroke-width="0.6" opacity="0.39" fill="none"/><path d="M38.5 10 C40.9 25 41.1 40 39.7 56" stroke="#b9a387" stroke-width="1.2" opacity="0.29" fill="none"/><path d="M85.6 36 C87.2 45 82.7 55 86.4 65" stroke="#5a4838" stroke-width="0.6" opacity="0.27" fill="none"/><path d="M18.1 -5 C18.0 16 18.5 37 18.1 58" stroke="#685341" stroke-width="1.0" opacity="0.30" fill="none"/><path d="M79.2 -19 C81.2 9 79.9 36 80.2 64" stroke="#cbb598" stroke-width="1.2" opacity="0.27" fill="none"/><path d="M50.1 -6 C51.9 22 52.5 49 51.0 77" stroke="#c2ac90" stroke-width="0.8" opacity="0.39" fill="none"/><path d="M29.4 33 C27.8 43 30.7 53 28.6 63" stroke="#5a4838" stroke-width="0.8" opacity="0.28" fill="none"/><path d="M24.1 -8 C25.9 17 21.7 42 25.0 67" stroke="#4f3f31" stroke-width="0.8" opacity="0.39" fill="none"/><path d="M53.0 10 C51.1 33 50.4 55 52.1 78" stroke="#4f3f31" stroke-width="1.0" opacity="0.24" fill="none"/><path d="M9.9 -11 C8.1 2 11.9 16 9.0 29" stroke="#685341" stroke-width="1.2" opacity="0.41" fill="none"/><path d="M92.1 -15 C91.4 -4 91.7 7 91.8 18" stroke="#5a4838" stroke-width="1.2" opacity="0.25" fill="none"/><path d="M33.0 31 C32.7 41 34.4 52 32.8 63" stroke="#4f3f31" stroke-width="0.6" opacity="0.20" fill="none"/><path d="M37.7 -1 C39.7 10 39.9 20 38.7 31" stroke="#5a4838" stroke-width="0.6" opacity="0.23" fill="none"/><path d="M84.5 28 C87.0 40 86.0 52 85.7 65" stroke="#c2ac90" stroke-width="1.0" opacity="0.38" fill="none"/><path d="M72.4 33 C74.0 50 73.9 68 73.2 85" stroke="#b9a387" stroke-width="1.0" opacity="0.25" fill="none"/><path d="M37.7 8 C36.9 17 38.6 25 37.3 34" stroke="#5a4838" stroke-width="1.0" opacity="0.48" fill="none"/><path d="M58.0 20 C58.2 38 57.4 56 58.1 74" stroke="#685341" stroke-width="0.8" opacity="0.30" fill="none"/><path d="M93.0 39 C93.7 47 94.4 56 93.3 65" stroke="#685341" stroke-width="1.2" opacity="0.24" fill="none"/><path d="M23.9 -19 C22.5 -3 22.9 13 23.2 29" stroke="#c2ac90" stroke-width="1.2" opacity="0.47" fill="none"/><path d="M50.3 18 C47.7 41 50.9 64 49.0 87" stroke="#685341" stroke-width="0.6" opacity="0.40" fill="none"/><path d="M70.6 31 C71.2 47 70.2 63 70.9 78" stroke="#5a4838" stroke-width="0.8" opacity="0.34" fill="none"/><path d="M46.0 12 C44.6 30 48.6 48 45.3 66" stroke="#4f3f31" stroke-width="1.0" opacity="0.41" fill="none"/><path d="M61.7 15 C61.2 35 62.8 56 61.4 76" stroke="#5a4838" stroke-width="0.8" opacity="0.20" fill="none"/><path d="M4.9 -16 C4.5 19 4.8 54 4.7 89" stroke="#4f3f31" stroke-width="1.0" opacity="0.22" fill="none"/><path d="M90.5 -11 C89.0 24 91.7 59 89.7 94" stroke="#685341" stroke-width="1.2" opacity="0.23" fill="none"/><rect x="4.7" y="32.1" width="0.8" height="2.0" fill="#5e4b3b" opacity="0.16"/><rect x="49.1" y="9.6" width="0.8" height="1.8" fill="#c6b093" opacity="0.25"/><rect x="55.9" y="49.2" width="0.8" height="2.4" fill="#c6b093" opacity="0.34"/><rect x="75.8" y="10.5" width="0.8" height="3.3" fill="#c6b093" opacity="0.21"/><rect x="10.6" y="68.7" width="0.8" height="2.2" fill="#c6b093" opacity="0.30"/><rect x="67.4" y="53.8" width="0.8" height="3.1" fill="#5e4b3b" opacity="0.34"/><rect x="17.7" y="19.2" width="0.8" height="3.7" fill="#5e4b3b" opacity="0.16"/><rect x="5.7" y="20.9" width="0.8" height="1.6" fill="#c6b093" opacity="0.16"/><rect x="20.7" y="21.4" width="0.8" height="3.8" fill="#5e4b3b" opacity="0.19"/><rect x="21.8" y="75.6" width="0.8" height="2.7" fill="#c6b093" opacity="0.20"/><rect x="32.0" y="57.4" width="0.8" height="3.5" fill="#5e4b3b" opacity="0.26"/><rect x="76.4" y="64.5" width="0.8" height="2.6" fill="#5e4b3b" opacity="0.34"/><rect x="36.3" y="11.6" width="0.8" height="3.1" fill="#5e4b3b" opacity="0.40"/><rect x="30.3" y="42.2" width="0.8" height="2.6" fill="#5e4b3b" opacity="0.24"/><rect x="9.0" y="67.4" width="0.8" height="2.9" fill="#5e4b3b" opacity="0.26"/><rect x="52.8" y="62.8" width="0.8" height="2.2" fill="#c6b093" opacity="0.34"/><rect x="7.1" y="16.4" width="0.8" height="3.2" fill="#5e4b3b" opacity="0.27"/><rect x="71.1" y="25.3" width="0.8" height="2.0" fill="#5e4b3b" opacity="0.31"/><rect x="30.4" y="69.8" width="0.8" height="3.3" fill="#c6b093" opacity="0.29"/><rect x="85.4" y="72.4" width="0.8" height="2.6" fill="#c6b093" opacity="0.35"/><rect x="28.3" y="24.5" width="0.8" height="3.9" fill="#c6b093" opacity="0.33"/><rect x="48.0" y="6.5" width="0.8" height="1.6" fill="#c6b093" opacity="0.32"/><rect x="54.4" y="61.3" width="0.8" height="3.5" fill="#c6b093" opacity="0.29"/><rect x="77.8" y="43.3" width="0.8" height="1.7" fill="#5e4b3b" opacity="0.26"/><rect x="79.5" y="62.5" width="0.8" height="2.8" fill="#5e4b3b" opacity="0.29"/><rect x="52.8" y="74.4" width="0.8" height="1.7" fill="#c6b093" opacity="0.29"/><rect x="73.3" y="6.5" width="0.8" height="2.2" fill="#5e4b3b" opacity="0.18"/><rect x="29.2" y="2.0" width="0.8" height="1.7" fill="#5e4b3b" opacity="0.35"/><rect x="39.3" y="54.8" width="0.8" height="3.4" fill="#c6b093" opacity="0.28"/><rect x="71.1" y="30.4" width="0.8" height="3.5" fill="#c6b093" opacity="0.23"/><rect x="12.7" y="37.6" width="0.8" height="3.3" fill="#5e4b3b" opacity="0.38"/><rect x="38.2" y="63.6" width="0.8" height="3.6" fill="#c6b093" opacity="0.35"/><rect x="77.5" y="68.4" width="0.8" height="2.8" fill="#5e4b3b" opacity="0.33"/><rect x="74.6" y="32.5" width="0.8" height="3.8" fill="#c6b093" opacity="0.21"/><rect x="15.1" y="48.9" width="0.8" height="2.3" fill="#5e4b3b" opacity="0.25"/><rect x="49.2" y="21.1" width="0.8" height="2.7" fill="#5e4b3b" opacity="0.33"/><rect x="28.2" y="12.0" width="0.8" height="3.8" fill="#5e4b3b" opacity="0.34"/><rect x="1.6" y="37.0" width="0.8" height="2.3" fill="#5e4b3b" opacity="0.20"/><rect x="33.4" y="45.3" width="0.8" height="3.0" fill="#c6b093" opacity="0.21"/><rect x="17.2" y="21.6" width="0.8" height="3.8" fill="#5e4b3b" opacity="0.38"/><rect x="58.3" y="72.5" width="0.8" height="3.6" fill="#c6b093" opacity="0.27"/><rect x="37.4" y="73.6" width="0.8" height="2.7" fill="#5e4b3b" opacity="0.21"/><rect x="4.6" y="73.0" width="0.8" height="3.9" fill="#c6b093" opacity="0.35"/><rect x="72.0" y="60.7" width="0.8" height="3.1" fill="#5e4b3b" opacity="0.21"/><rect x="1.0" y="36.4" width="0.8" height="2.6" fill="#c6b093" opacity="0.21"/><rect x="39.2" y="67.4" width="0.8" height="1.9" fill="#c6b093" opacity="0.23"/><rect x="24.1" y="66.9" width="0.8" height="3.1" fill="#5e4b3b" opacity="0.40"/><rect x="24.8" y="41.2" width="0.8" height="2.9" fill="#5e4b3b" opacity="0.19"/><rect x="19.0" y="70.5" width="0.8" height="3.6" fill="#5e4b3b" opacity="0.17"/><rect x="25.1" y="55.2" width="0.8" height="3.7" fill="#5e4b3b" opacity="0.32"/><rect x="7.7" y="57.6" width="0.8" height="1.5" fill="#c6b093" opacity="0.20"/><rect x="18.0" y="52.5" width="0.8" height="2.0" fill="#c6b093" opacity="0.29"/><rect x="48.9" y="12.1" width="0.8" height="2.3" fill="#c6b093" opacity="0.25"/><rect x="51.7" y="76.8" width="0.8" height="2.4" fill="#5e4b3b" opacity="0.32"/><rect x="9.8" y="30.4" width="0.8" height="3.4" fill="#c6b093" opacity="0.35"/><rect x="11.3" y="34.3" width="0.8" height="3.3" fill="#c6b093" opacity="0.27"/><rect x="27.3" y="8.7" width="0.8" height="3.6" fill="#5e4b3b" opacity="0.36"/><rect x="66.9" y="69.4" width="0.8" height="2.2" fill="#5e4b3b" opacity="0.24"/><rect x="50.2" y="23.0" width="0.8" height="3.4" fill="#c6b093" opacity="0.29"/><rect x="8.1" y="14.5" width="0.8" height="3.3" fill="#c6b093" opacity="0.23"/><rect x="87.9" y="43.3" width="0.8" height="2.6" fill="#c6b093" opacity="0.25"/><rect x="9.5" y="47.9" width="0.8" height="3.2" fill="#5e4b3b" opacity="0.33"/><rect x="16.7" y="31.0" width="0.8" height="3.0" fill="#c6b093" opacity="0.17"/><rect x="21.1" y="12.1" width="0.8" height="2.6" fill="#5e4b3b" opacity="0.34"/><rect x="31.8" y="63.4" width="0.8" height="3.1" fill="#5e4b3b" opacity="0.34"/><rect x="76.4" y="29.7" width="0.8" height="3.8" fill="#c6b093" opacity="0.31"/><rect x="67.6" y="47.2" width="0.8" height="4.0" fill="#c6b093" opacity="0.35"/><rect x="61.4" y="46.9" width="0.8" height="2.2" fill="#5e4b3b" opacity="0.20"/><rect x="28.5" y="34.0" width="0.8" height="2.0" fill="#c6b093" opacity="0.23"/><rect x="27.3" y="7.9" width="0.8" height="2.1" fill="#5e4b3b" opacity="0.28"/><rect x="27.8" y="18.0" width="0.8" height="2.9" fill="#5e4b3b" opacity="0.20"/><rect x="86.8" y="76.9" width="0.8" height="2.9" fill="#5e4b3b" opacity="0.16"/><rect x="61.3" y="59.8" width="0.8" height="2.1" fill="#5e4b3b" opacity="0.29"/><rect x="64.8" y="25.3" width="0.8" height="2.2" fill="#c6b093" opacity="0.37"/><rect x="42.1" y="56.2" width="0.8" height="3.8" fill="#5e4b3b" opacity="0.29"/><rect x="52.1" y="43.1" width="0.8" height="1.9" fill="#c6b093" opacity="0.34"/><rect x="83.4" y="25.8" width="0.8" height="1.8" fill="#5e4b3b" opacity="0.36"/><rect x="26.8" y="69.1" width="0.8" height="3.4" fill="#5e4b3b" opacity="0.24"/><rect x="15.4" y="46.0" width="0.8" height="2.6" fill="#5e4b3b" opacity="0.25"/><rect x="72.8" y="71.6" width="0.8" height="2.3" fill="#5e4b3b" opacity="0.32"/><rect x="68.6" y="29.4" width="0.8" height="1.9" fill="#5e4b3b" opacity="0.25"/><rect x="3.1" y="40.6" width="0.8" height="2.9" fill="#5e4b3b" opacity="0.19"/><rect x="48.3" y="20.3" width="0.8" height="1.6" fill="#c6b093" opacity="0.35"/><rect x="67.1" y="60.6" width="0.8" height="3.9" fill="#c6b093" opacity="0.30"/><rect x="43.7" y="31.7" width="0.8" height="3.4" fill="#c6b093" opacity="0.27"/><rect x="92.5" y="64.5" width="0.8" height="3.6" fill="#c6b093" opacity="0.18"/><rect x="10.7" y="72.3" width="0.8" height="2.8" fill="#c6b093" opacity="0.26"/><rect x="84.1" y="24.7" width="0.8" height="2.2" fill="#5e4b3b" opacity="0.30"/><rect x="40.3" y="29.0" width="0.8" height="3.4" fill="#c6b093" opacity="0.23"/><rect x="55.2" y="5.4" width="0.8" height="3.6" fill="#5e4b3b" opacity="0.21"/><rect x="81.2" y="74.9" width="0.8" height="3.2" fill="#c6b093" opacity="0.28"/><rect x="22.2" y="23.6" width="0.8" height="3.9" fill="#c6b093" opacity="0.37"/><rect x="92.9" y="56.3" width="0.8" height="3.7" fill="#c6b093" opacity="0.26"/><rect x="74.9" y="17.1" width="0.8" height="2.9" fill="#c6b093" opacity="0.38"/><rect x="9.2" y="61.0" width="0.8" height="3.7" fill="#5e4b3b" opacity="0.29"/><rect x="42.1" y="22.8" width="0.8" height="1.6" fill="#c6b093" opacity="0.19"/><rect x="41.0" y="34.7" width="0.8" height="1.9" fill="#c6b093" opacity="0.32"/><rect x="21.5" y="23.6" width="0.8" height="3.7" fill="#c6b093" opacity="0.23"/><rect x="46.4" y="71.9" width="0.8" height="3.7" fill="#c6b093" opacity="0.20"/><rect x="79.9" y="53.3" width="0.8" height="2.0" fill="#5e4b3b" opacity="0.36"/><rect x="32.9" y="36.4" width="0.8" height="3.1" fill="#5e4b3b" opacity="0.32"/><rect x="52.1" y="41.0" width="0.8" height="2.0" fill="#5e4b3b" opacity="0.37"/><rect x="4.7" y="8.2" width="0.8" height="3.9" fill="#c6b093" opacity="0.22"/><rect x="39.1" y="67.7" width="0.8" height="3.2" fill="#c6b093" opacity="0.38"/><rect x="41.4" y="6.1" width="0.8" height="3.7" fill="#5e4b3b" opacity="0.18"/><rect x="64.3" y="20.7" width="0.8" height="2.8" fill="#5e4b3b" opacity="0.22"/><rect x="25.4" y="61.9" width="0.8" height="3.0" fill="#5e4b3b" opacity="0.21"/><rect x="28.0" y="71.4" width="0.8" height="2.2" fill="#5e4b3b" opacity="0.31"/><rect x="8.4" y="75.7" width="0.8" height="3.8" fill="#c6b093" opacity="0.17"/><rect x="84.4" y="0.5" width="0.8" height="2.8" fill="#c6b093" opacity="0.26"/><rect x="52.9" y="12.7" width="0.8" height="2.1" fill="#5e4b3b" opacity="0.22"/><rect x="51.0" y="14.3" width="0.8" height="4.0" fill="#5e4b3b" opacity="0.16"/><rect x="42.9" y="57.8" width="0.8" height="1.5" fill="#c6b093" opacity="0.37"/><rect x="5.6" y="4.9" width="0.8" height="2.3" fill="#c6b093" opacity="0.27"/><rect x="3.0" y="22.4" width="0.8" height="3.0" fill="#5e4b3b" opacity="0.34"/><rect x="10.4" y="33.5" width="0.8" height="2.9" fill="#c6b093" opacity="0.21"/><rect x="66.6" y="55.6" width="0.8" height="2.7" fill="#c6b093" opacity="0.21"/><rect x="53.9" y="38.4" width="0.8" height="2.0" fill="#5e4b3b" opacity="0.39"/><rect x="4.9" y="34.5" width="0.8" height="2.3" fill="#5e4b3b" opacity="0.30"/><rect x="56.6" y="62.1" width="0.8" height="3.3" fill="#c6b093" opacity="0.36"/><rect x="2.9" y="8.8" width="0.8" height="2.9" fill="#5e4b3b" opacity="0.29"/><rect x="73.6" y="18.3" width="0.8" height="1.6" fill="#5e4b3b" opacity="0.26"/><rect x="64.7" y="63.1" width="0.8" height="3.4" fill="#c6b093" opacity="0.27"/><rect x="60.5" y="39.3" width="0.8" height="2.1" fill="#c6b093" opacity="0.19"/><rect x="64.2" y="64.0" width="0.8" height="1.7" fill="#c6b093" opacity="0.25"/><rect x="33.9" y="16.7" width="0.8" height="1.8" fill="#5e4b3b" opacity="0.34"/><rect x="55.9" y="10.4" width="0.8" height="2.8" fill="#c6b093" opacity="0.40"/><rect x="0.3" y="31.6" width="0.8" height="1.7" fill="#5e4b3b" opacity="0.29"/><rect x="43.9" y="72.0" width="0.8" height="3.2" fill="#5e4b3b" opacity="0.33"/><rect x="90.8" y="47.2" width="0.8" height="2.1" fill="#c6b093" opacity="0.29"/><rect x="22.5" y="35.5" width="0.8" height="2.4" fill="#5e4b3b" opacity="0.23"/><rect x="91.3" y="47.0" width="0.8" height="1.9" fill="#5e4b3b" opacity="0.30"/><rect x="92.5" y="56.8" width="0.8" height="2.7" fill="#5e4b3b" opacity="0.25"/><rect x="78.4" y="29.3" width="0.8" height="2.0" fill="#5e4b3b" opacity="0.24"/><rect x="17.1" y="42.3" width="0.8" height="2.7" fill="#5e4b3b" opacity="0.25"/><rect x="55.2" y="58.5" width="0.8" height="2.6" fill="#c6b093" opacity="0.40"/><rect x="63.2" y="66.4" width="0.8" height="2.9" fill="#5e4b3b" opacity="0.25"/><rect x="4.4" y="21.3" width="0.8" height="3.1" fill="#c6b093" opacity="0.28"/><rect x="69.0" y="39.4" width="0.8" height="2.2" fill="#5e4b3b" opacity="0.24"/><rect x="14.3" y="72.1" width="0.8" height="1.8" fill="#c6b093" opacity="0.21"/><rect x="78.1" y="9.2" width="0.8" height="3.6" fill="#c6b093" opacity="0.26"/><rect x="79.5" y="29.4" width="0.8" height="3.4" fill="#c6b093" opacity="0.28"/><rect x="5.1" y="30.3" width="0.8" height="2.7" fill="#5e4b3b" opacity="0.20"/><rect x="47.8" y="9.8" width="0.8" height="2.3" fill="#5e4b3b" opacity="0.26"/><rect x="50.6" y="10.5" width="0.8" height="2.3" fill="#c6b093" opacity="0.26"/><rect x="35.1" y="67.8" width="0.8" height="2.8" fill="#c6b093" opacity="0.26"/><rect x="12.7" y="39.8" width="0.8" height="2.1" fill="#c6b093" opacity="0.22"/><rect x="32.1" y="16.6" width="0.8" height="3.6" fill="#5e4b3b" opacity="0.34"/><rect x="44.9" y="0.9" width="0.8" height="3.2" fill="#c6b093" opacity="0.17"/><rect x="79.3" y="43.0" width="0.8" height="3.2" fill="#c6b093" opacity="0.39"/><rect x="80.8" y="18.1" width="0.8" height="1.7" fill="#c6b093" opacity="0.26"/><rect x="36.5" y="4.6" width="0.8" height="3.8" fill="#c6b093" opacity="0.22"/><rect x="65.4" y="17.1" width="0.8" height="2.0" fill="#c6b093" opacity="0.34"/><rect x="32.6" y="54.8" width="0.8" height="3.4" fill="#5e4b3b" opacity="0.38"/><rect x="74.8" y="36.8" width="0.8" height="3.3" fill="#c6b093" opacity="0.29"/><rect x="65.1" y="1.8" width="0.8" height="1.8" fill="#c6b093" opacity="0.38"/><rect x="84.9" y="20.9" width="0.8" height="2.7" fill="#c6b093" opacity="0.30"/><rect x="43.6" y="25.1" width="0.8" height="1.7" fill="#c6b093" opacity="0.16"/><rect x="30.1" y="28.7" width="0.8" height="2.2" fill="#c6b093" opacity="0.32"/><rect x="17.3" y="36.1" width="0.8" height="3.9" fill="#c6b093" opacity="0.24"/><path d="M72 77 C72 52 74 40 77.5 33 C81 40 83 52 83.5 77" stroke="#5f4c3c" stroke-width="1" opacity="0.3" fill="none"/></svg></div>
<div class="a" style="left:638px;top:59px;width:117px;height:18px;border:1px solid #fbfbfb;box-shadow:0 0 0 1px #ebebeb"></div>
<div class="t" style="left:636px;top:81px;letter-spacing:-0.18px">Walnut</div>
<div class="t" style="left:636px;top:104px;letter-spacing:-0.34px">Material  / Arauco / Striking Woods / Genuino / Horizontals /</div>
<div class="a" style="left:638px;top:121px;width:120px;height:20px;background:#f9f9f9;border:1px solid #e8e8e8;border-radius:1px"></div>
<div class="t" style="left:641px;top:124px;color:#6d6d6d;letter-spacing:-0.60px">TEXTURE</div>
<svg class="a" style="left:744px;top:128px" width="10" height="6" viewBox="0 0 10 6"><path d="M1.2 1.2L5 4.5L8.9 1.2" fill="none" stroke="#a8a8a8" stroke-width="1.1"/></svg>
<div class="cb" style="left:637px;top:149px;background:#c6c6c6"></div>
<svg class="a" style="left:637px;top:149px" width="13" height="13" viewBox="0 0 13 13"><path d="M3.2 6.8L5.4 9L9.8 4.4" fill="none" stroke="#fff" stroke-width="1"/></svg>
<div class="t" style="left:654px;top:148px;color:#a0a0a0;letter-spacing:-0.32px">Crear modelo en la opción de dirección del vino Vertical</div>

<div class="btn" style="left:1022px;top:82px;width:161px;height:21px">Elige material</div>
<div class="btn" style="left:1022px;top:132px;width:161px;height:21px">Elige material salvo</div>
<!-- tabs -->
<div class="a" style="left:26px;top:171px;width:46px;height:21px;border-top:1px solid #fff;border-left:1px solid #fff"></div>
<div class="a" style="left:28px;top:172px;width:43px;height:20px;background:#80d69c;z-index:2"></div>
<div class="t" style="left:35px;top:175px;z-index:3;letter-spacing:-0.15px">Placa</div>
<div class="a" style="left:72px;top:172px;width:79px;height:19px;border-top:1px solid #fff;border-right:2px solid #7a7a7a"></div>
<div class="a" style="left:71px;top:172px;width:1px;height:19px;background:#7a7a7a"></div>
<div class="t" style="left:73px;top:174px;letter-spacing:-0.40px">Cinta de borde</div>
<!-- tab page -->
<div class="a" style="left:26px;top:190px;width:1159px;height:558px;background:#f9f9f9;border-top:1px solid #fff;border-left:1px solid #fff;border-right:1px solid #696969;border-bottom:1px solid #696969"></div>
<div class="a" style="left:27px;top:191px;width:1157px;height:556px;border-top:1px solid #e3e3e3;border-left:2px solid #f0f0f0;border-right:1px solid #a0a0a0;border-bottom:1px solid #a0a0a0"></div>

<div class="t" style="left:38px;top:209px;letter-spacing:-0.14px">Aplicación</div>
<div class="t" style="left:201px;top:209px;letter-spacing:-0.35px">Núcleo material</div>
<div class="a" style="left:36px;top:228px;width:160px;height:154px;background:#fff;border:1px solid #828790"></div>
<div class="a" style="left:202px;top:228px;width:160px;height:154px;background:#fff;border:1px solid #828790"></div>

<div class="cb" style="left:38px;top:230px"></div>
<div class="cb" style="left:38px;top:244px"></div>
<div class="cbu" style="left:38px;top:258px"></div>
<div class="cbu" style="left:38px;top:272px"></div>
<div class="cbu" style="left:38px;top:286px"></div>
<div class="cbu" style="left:38px;top:300px"></div>
<svg class="a" style="left:38px;top:230px" width="13" height="27" viewBox="0 0 13 27"><path d="M3.2 6.8L5.4 9L9.8 4.4M3.2 20.8L5.4 23L9.8 18.4" fill="none" stroke="#fff" stroke-width="1"/></svg>
<div class="t" style="left:56px;top:230px;letter-spacing:-0.74px">Box</div>
<div class="t" style="left:55px;top:244px;letter-spacing:-0.87px">Composition</div>
<div class="t" style="left:55px;top:258px;letter-spacing:-0.54px">Counter Tops</div>
<div class="t" style="left:56px;top:272px;letter-spacing:-0.75px">Doors</div>
<div class="t" style="left:56px;top:286px;letter-spacing:-1.13px">Frames</div>
<div class="t" style="left:56px;top:300px;letter-spacing:-0.74px">Panels</div>

<div class="cb" style="left:204px;top:230px"></div>
<div class="cbu" style="left:204px;top:244px"></div>
<div class="cbu" style="left:204px;top:258px"></div>
<svg class="a" style="left:204px;top:230px" width="13" height="13" viewBox="0 0 13 13"><path d="M3.2 6.8L5.4 9L9.8 4.4" fill="none" stroke="#fff" stroke-width="1"/></svg>
<div class="t" style="left:222px;top:230px;letter-spacing:-1.00px">MDF</div>
<div class="t" style="left:222px;top:244px;letter-spacing:-0.85px">MELAMINE</div>
<div class="t" style="left:222px;top:258px;letter-spacing:-0.81px">PLYWOOD</div>

<!-- grid 1 -->
<div class="a" style="left:368px;top:228px;width:807px;height:154px;background:#ababab;border:1px solid #000"></div><div class="a" style="left:369px;top:229px;width:805px;height:152px;border-top:1px solid #a0a0a0;border-left:1px solid #a0a0a0;border-bottom:1px solid #bdbdbd"></div>
<div class="a" style="left:370px;top:230px;width:804px;height:55px;background:#fff"></div>
<div class="gh" style="left:370px;top:262px;width:13px;height:1px;background:#a0a0a0"></div>
<div class="gl" style="left:383px;top:230px;width:1px;height:55px"></div>
<div class="gl" style="left:384px;top:262px;width:790px;height:1px"></div>
<div class="gl" style="left:384px;top:284px;width:747px;height:1px"></div>
<div class="gh" style="left:480px;top:230px;width:1px;height:32px"></div>
<div class="gh" style="left:555px;top:230px;width:1px;height:32px"></div>
<div class="gh" style="left:713px;top:230px;width:1px;height:32px"></div>
<div class="gh" style="left:799px;top:230px;width:1px;height:32px"></div>
<div class="gh" style="left:911px;top:230px;width:1px;height:32px"></div>
<div class="gh" style="left:1009px;top:230px;width:1px;height:32px"></div>
<div class="gh" style="left:1130px;top:230px;width:1px;height:32px"></div>
<div class="gl" style="left:480px;top:263px;width:1px;height:21px"></div>
<div class="gl" style="left:555px;top:263px;width:1px;height:21px"></div>
<div class="gl" style="left:713px;top:263px;width:1px;height:21px"></div>
<div class="gl" style="left:799px;top:263px;width:1px;height:21px"></div>
<div class="gl" style="left:911px;top:263px;width:1px;height:21px"></div>
<div class="gl" style="left:1009px;top:263px;width:1px;height:21px"></div>
<div class="t" style="left:391px;top:233px;letter-spacing:-0.57px">Núcleo
material</div>
<div class="t" style="left:488px;top:240px;letter-spacing:-0.56px">Acabado</div>
<div class="t" style="left:563px;top:240px;letter-spacing:-0.76px">Unidad de medida</div>
<div class="t" style="left:721px;top:233px;letter-spacing:-0.43px">Ancho de
la placa</div>
<div class="t" style="left:806px;top:233px;letter-spacing:-0.59px">Ancho de la
placa en mm</div>
<div class="t" style="left:919px;top:233px;letter-spacing:-0.49px">Profundidad
de la placa</div>
<div class="t" style="left:1017px;top:233px;letter-spacing:-0.65px">Longitud de la
placa en mm</div>
<div class="t" style="left:1138px;top:240px;letter-spacing:-0.34px">Activo</div>
<div class="t" style="left:387px;top:267px;letter-spacing:-1.00px">MDF</div>
<div class="t" style="left:484px;top:267px;letter-spacing:-0.44px">51423</div>
<div class="t" style="left:560px;top:267px;letter-spacing:-0.62px">Milímetro</div>
<div class="a" style="left:695px;top:264px;width:17px;height:18px;background:#f0f0f0"></div>
<svg class="a" style="left:700px;top:271px" width="7" height="4" viewBox="0 0 7 4"><path d="M0 0H7L3.5 4Z" fill="#000"/></svg>
<div class="t" style="left:717px;top:267px;letter-spacing:-0.23px">2750</div>
<div class="t" style="left:803px;top:267px;color:#9a9a9a;letter-spacing:-0.23px">2750</div>
<div class="t" style="left:915px;top:267px;letter-spacing:-0.23px">1850</div>
<div class="t" style="left:1013px;top:267px;color:#9a9a9a;letter-spacing:-0.23px">1850</div>
<div class="a" style="left:1131px;top:263px;width:42px;height:21px;background:#0078d7"></div>
<div class="a" style="left:1145px;top:267px;width:13px;height:13px;border-radius:3px;background:#0a5fb4"></div>
<svg class="a" style="left:1145px;top:267px" width="13" height="13" viewBox="0 0 13 13"><path d="M3.5 6.8L5.5 8.6L9.5 4.6" fill="none" stroke="#fff" stroke-width="1"/></svg>

<!-- prices -->
<div class="t" style="left:43px;top:409px;letter-spacing:-0.20px">Precios</div>
<div class="tb" style="left:89px;top:406px;width:102px;height:20px"></div>
<div class="btn" style="left:41px;top:433px;width:202px;height:21px">Actualizar todos los precios</div>
<div class="btn" style="left:251px;top:433px;width:202px;height:21px">Actualizar todos los precios cero</div>
<div class="t" style="left:854px;top:413px;letter-spacing:-0.50px">Código de tapa furo</div>
<svg class="a" style="left:957px;top:412px" width="14" height="14" viewBox="0 0 14 14"><circle cx="7" cy="7" r="5.6" fill="none" stroke="#333" stroke-width="1"/><path d="M7 6V10" stroke="#333" stroke-width="1.1"/><circle cx="7" cy="4.2" r="0.7" fill="#333"/></svg>
<div class="a" style="left:855px;top:429px;width:185px;height:21px;background:#fdfdfd;border:1px solid #d2d2d2;border-bottom-color:#bdbdbd;border-radius:2px"></div>
<svg class="a" style="left:1026px;top:437px" width="10" height="6" viewBox="0 0 10 6"><path d="M1.1 1L4.95 4.4L8.8 1" fill="none" stroke="#444" stroke-width="1.1"/></svg>
<div class="btn" style="left:1047px;top:430px;width:130px;height:19px;line-height:17px">Eliminar selección</div>
<!-- grid 2 -->
<div class="a" style="left:39px;top:481px;width:1136px;height:260px;background:#ababab;border-top:1px solid #000;border-left:1px solid #000;border-right:1px solid #000"></div>
<div class="a" style="left:40px;top:482px;width:1134px;height:259px;border-top:1px solid #a0a0a0;border-left:1px solid #a0a0a0"></div>
<div class="a" style="left:41px;top:483px;width:1133px;height:130px;background:#fff"></div>
<div class="gl" style="left:41px;top:502px;width:1133px;height:1px"></div>
<div class="gh" style="left:280px;top:483px;width:1px;height:19px"></div>
<div class="gh" style="left:459px;top:483px;width:1px;height:19px"></div>
<div class="gh" style="left:636px;top:483px;width:1px;height:19px"></div>
<div class="gh" style="left:815px;top:483px;width:1px;height:19px"></div>
<div class="gh" style="left:994px;top:483px;width:1px;height:19px"></div>
<div class="gl" style="left:101px;top:483px;width:1px;height:130px"></div>
<div class="gl" style="left:280px;top:503px;width:1px;height:110px"></div>
<div class="gl" style="left:459px;top:503px;width:1px;height:110px"></div>
<div class="gl" style="left:636px;top:503px;width:1px;height:110px"></div>
<div class="gl" style="left:815px;top:503px;width:1px;height:110px"></div>
<div class="gl" style="left:994px;top:503px;width:1px;height:110px"></div>
<div class="gl" style="left:102px;top:524px;width:1072px;height:1px"></div>
<div class="gh" style="left:41px;top:524px;width:60px;height:1px"></div>
<div class="gl" style="left:102px;top:546px;width:1072px;height:1px"></div>
<div class="gh" style="left:41px;top:546px;width:60px;height:1px"></div>
<div class="gl" style="left:102px;top:568px;width:1072px;height:1px"></div>
<div class="gh" style="left:41px;top:568px;width:60px;height:1px"></div>
<div class="gl" style="left:102px;top:590px;width:1072px;height:1px"></div>
<div class="gh" style="left:41px;top:590px;width:60px;height:1px"></div>
<div class="gl" style="left:102px;top:612px;width:1072px;height:1px"></div>
<div class="gh" style="left:41px;top:612px;width:60px;height:1px"></div>
<div class="t" style="left:109px;top:486px;letter-spacing:-0.79px">Espesor</div>
<div class="t" style="left:288px;top:486px;letter-spacing:-0.92px">Espesor en mm</div>
<div class="t" style="left:466px;top:486px;letter-spacing:-0.67px">Núcleo material</div>
<div class="t" style="left:643px;top:486px;letter-spacing:-0.59px">Código de corte</div>
<div class="t" style="left:823px;top:486px;letter-spacing:-0.63px">Referencia</div>
<div class="t" style="left:1002px;top:486px;letter-spacing:-0.59px">Precios</div>
<svg class="a" style="left:775.5px;top:483px" width="18" height="18" viewBox="0 0 18 18"><circle cx="9" cy="9.3" r="8" fill="none" stroke="#222" stroke-width="1.1"/><path d="M9 7.6V12.6M7.4 12.8H10.6M7.8 7.8H9" stroke="#222" stroke-width="1.2"/><circle cx="9" cy="5.2" r="0.9" fill="#222"/></svg>
<svg class="a" style="left:954.5px;top:483px" width="18" height="18" viewBox="0 0 18 18"><circle cx="9" cy="9.3" r="8" fill="none" stroke="#222" stroke-width="1.1"/><path d="M9 7.6V12.6M7.4 12.8H10.6M7.8 7.8H9" stroke="#222" stroke-width="1.2"/><circle cx="9" cy="5.2" r="0.9" fill="#222"/></svg>
<svg class="a" style="left:1133.5px;top:483px" width="18" height="18" viewBox="0 0 18 18"><circle cx="9" cy="9.3" r="8" fill="none" stroke="#222" stroke-width="1.1"/><path d="M9 7.6V12.6M7.4 12.8H10.6M7.8 7.8H9" stroke="#222" stroke-width="1.2"/><circle cx="9" cy="5.2" r="0.9" fill="#222"/></svg>
<div class="t" style="left:105px;top:507px;letter-spacing:-0.07px">3/4 in</div>
<div class="t" style="left:284px;top:507px;color:#9a9a9a;letter-spacing:-0.41px">19.05</div>
<div class="t" style="left:463px;top:507px;letter-spacing:-0.50px">MDF</div>
<div class="t" style="left:640px;top:507px;letter-spacing:-0.57px">5142319.05</div>
<div class="t" style="left:819px;top:507px;letter-spacing:-0.53px">SHTB.MDF.19.05.51423</div>
<div class="t" style="left:998px;top:507px;letter-spacing:-0.38px">53,25</div>
<div class="t" style="left:105px;top:529px;letter-spacing:-0.29px">1/2 in</div>
<div class="t" style="left:284px;top:529px;color:#9a9a9a;letter-spacing:-0.28px">12.7</div>
<div class="t" style="left:463px;top:529px;letter-spacing:-1.00px">MDF</div>
<div class="t" style="left:640px;top:529px;letter-spacing:-0.52px">5142312.7</div>
<div class="t" style="left:819px;top:529px;letter-spacing:-0.60px">SHTB.MDF.12.7.51423</div>
<div class="t" style="left:998px;top:529px;letter-spacing:0.30px">0</div>
<div class="t" style="left:105px;top:551px;letter-spacing:-0.29px">5/8 in</div>
<div class="t" style="left:284px;top:551px;color:#9a9a9a;letter-spacing:-0.46px">15.875</div>
<div class="t" style="left:463px;top:551px;letter-spacing:-1.00px">MDF</div>
<div class="t" style="left:640px;top:551px;letter-spacing:-0.51px">5142315.875</div>
<div class="t" style="left:819px;top:551px;letter-spacing:-0.54px">SHTB.MDF.15.875.51423</div>
<div class="t" style="left:998px;top:551px;letter-spacing:0.30px">0</div>
<div class="t" style="left:105px;top:573px;letter-spacing:-0.29px">1/4 in</div>
<div class="t" style="left:284px;top:573px;color:#9a9a9a;letter-spacing:-0.28px">6.35</div>
<div class="t" style="left:463px;top:573px;letter-spacing:-1.00px">MDF</div>
<div class="t" style="left:640px;top:573px;letter-spacing:-0.49px">514236.35</div>
<div class="t" style="left:819px;top:573px;letter-spacing:-0.60px">SHTB.MDF.6.35.51423</div>
<div class="t" style="left:998px;top:573px;letter-spacing:0.30px">0</div>
<div class="t" style="left:105px;top:595px;letter-spacing:-0.02px">1/2 ft</div>
<div class="t" style="left:284px;top:595px;color:#9a9a9a;letter-spacing:-0.28px">12.7</div>
<div class="t" style="left:463px;top:595px;letter-spacing:-1.00px">MDF</div>
<div class="t" style="left:640px;top:595px;letter-spacing:-0.52px">5142312.7</div>
<div class="t" style="left:819px;top:595px;letter-spacing:-0.60px">SHTB.MDF.12.7.51423</div>
<div class="t" style="left:998px;top:595px;letter-spacing:0.30px">0</div>
<svg class="a" style="left:45px;top:510px" width="14" height="10" viewBox="0 0 14 10"><circle cx="2.5" cy="7.5" r="0.75" fill="#222"/><circle cx="4.5" cy="7.5" r="0.75" fill="#222"/><path d="M6.2 7.6L11.4 2.6" stroke="#222" stroke-width="2" stroke-linecap="round"/></svg>
<div class="a" style="left:91px;top:498px;width:1090px;height:33px;border:3px solid #ed1c24"></div>
<svg class="a" style="left:1160px;top:440px" width="70" height="80" viewBox="0 0 70 80"><path d="M53.8 11 L14 66" stroke="#ff0000" stroke-width="5.2" stroke-linecap="round" fill="none"/><path d="M15.2 37 C17.5 47 15 58 10.5 69.5" stroke="#ff0000" stroke-width="6.2" stroke-linecap="round" fill="none"/><path d="M10.5 69.5 C20 63 29 57.5 39.8 55" stroke="#ff0000" stroke-width="6.2" stroke-linecap="round" fill="none"/><path d="M9 70 L13 52 L28 58 Z" fill="#ff0000"/></svg>
<div class="btn" style="left:1011px;top:755px;width:73px;height:21px">Fechar</div>
<div class="btn" style="left:1107px;top:755px;width:73px;height:21px">Guardar</div>
<svg class="a" style="left:1185px;top:769px" width="11" height="11" viewBox="0 0 11 11"><g fill="#bdbdbd"><rect x="8" y="2" width="2" height="2"/><rect x="5" y="5" width="2" height="2"/><rect x="8" y="5" width="2" height="2"/><rect x="2" y="8" width="2" height="2"/><rect x="5" y="8" width="2" height="2"/><rect x="8" y="8" width="2" height="2"/></g></svg>
</body></html>
